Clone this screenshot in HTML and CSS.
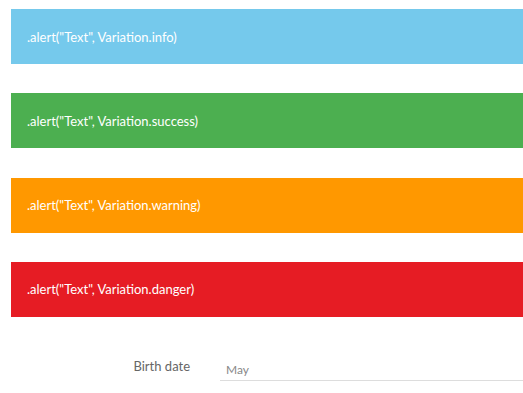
FILE: index.html
```html
<!DOCTYPE html>
<html>
<head>
<meta charset="utf-8">
<link rel="stylesheet" href="styles.css">
</head>
<body>
<div class="alerts">
  <div class="alert alert-info">.alert("Text", Variation.info)</div>
  <div class="alert alert-success">.alert("Text", Variation.success)</div>
  <div class="alert alert-warning">.alert("Text", Variation.warning)</div>
  <div class="alert alert-danger">.alert("Text", Variation.danger)</div>
</div>
<div class="form-row">
  <label class="form-label">Birth date</label>
  <div class="form-input">May</div>
</div>
</body>
</html>
```
FILE: styles.css
```css
html, body {
  margin: 0;
  padding: 0;
  background: #fff;
  overflow: hidden;
}
body {
  padding: 9px 0 0 11px;
  font-family: "Lato", "Open Sans", sans-serif;
}
.alerts {
  display: flex;
  flex-direction: column;
  gap: 29.33px;
}
.alert {
  height: 55px;
  display: flex;
  align-items: center;
  padding-left: 16px;
  color: #fff;
  font-size: 13px;
}
.alert-info { background: #75c9ec; }
.alert-success { background: #4caf50; }
.alert-warning { background: #ff9800; }
.alert-danger { background: #e61c24; }
.form-row {
  display: flex;
  align-items: flex-end;
  margin-top: 41px;
}
.form-label {
  width: 209px;
  text-align: right;
  font-size: 13px;
  color: #666;
  padding-right: 30px;
  padding-bottom: 7px;
  box-sizing: border-box;
}
.form-input {
  flex: 1;
  font-size: 12px;
  color: #888;
  padding: 0 0 3px 6px;
  border-bottom: 1px solid #ddd;
}
```
